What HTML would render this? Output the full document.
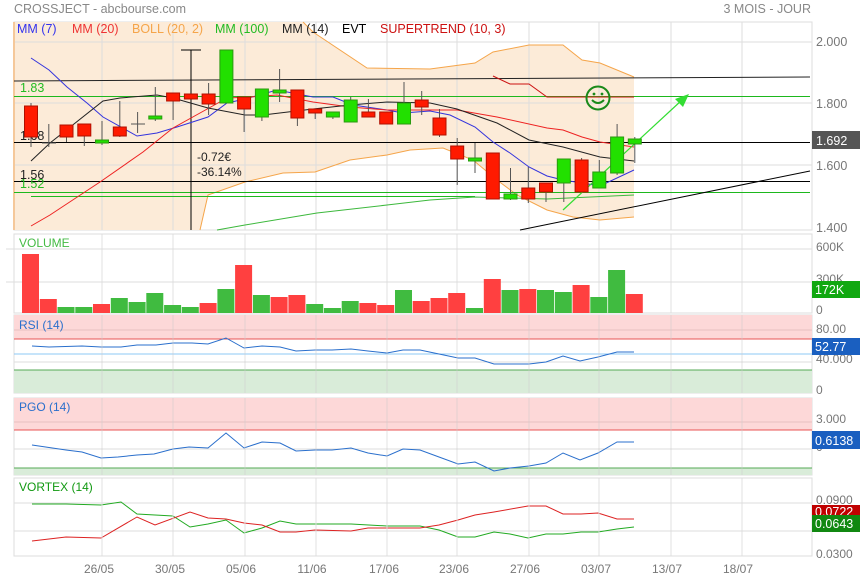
<!DOCTYPE html>
<html><head><meta charset="utf-8"><style>
html,body{margin:0;padding:0;background:#fff;}
svg{display:block;font-family:"Liberation Sans",sans-serif;}
</style></head><body>
<svg width="860" height="579" viewBox="0 0 860 579" xmlns="http://www.w3.org/2000/svg">
<rect width="860" height="579" fill="#fff"/>
<text x="14" y="13" font-size="12.5" fill="#888">CROSSJECT - abcbourse.com</text>
<text x="811" y="13" font-size="12.5" fill="#888" text-anchor="end">3 MOIS - JOUR</text>

<!-- MAIN PANEL -->
<rect x="14" y="22" width="798" height="208" fill="#fff" stroke="#ddd"/>
<path d="M14,22 L14,230 L200,230 L208,195 L245,182 L283,173 L315,172 L350,160 L387,155 L410,150 L443,148 L473,160 L497,180 L517,195 L547,210 L573,217 L600,220 L634,217 L634,77 L600,63 L582,60 L563,45 L529,45 L493,52 L475,63 L430,69 L367,68 L313,32 L303,22 Z" fill="#fcebd8"/>
<g stroke="#ddd" stroke-width="1">
<line x1="14" y1="42" x2="812" y2="42"/><line x1="14" y1="103" x2="812" y2="103"/><line x1="14" y1="165" x2="812" y2="165"/>
<line x1="102" y1="22" x2="102" y2="230"/><line x1="173" y1="22" x2="173" y2="230"/><line x1="245" y1="22" x2="245" y2="230"/><line x1="316" y1="22" x2="316" y2="230"/><line x1="387" y1="22" x2="387" y2="230"/><line x1="457" y1="22" x2="457" y2="230"/><line x1="529" y1="22" x2="529" y2="230"/><line x1="599" y1="22" x2="599" y2="230"/><line x1="671" y1="22" x2="671" y2="230"/><line x1="742" y1="22" x2="742" y2="230"/>
</g>
<line x1="14" y1="22" x2="14" y2="230" stroke="#f5c89a" stroke-width="2"/>
<!-- boll lines -->
<polyline fill="none" stroke="#f5a54a" stroke-width="1" points="303,22 313,32 367,68 430,69 475,63 493,52 529,45 563,45 582,60 600,63 634,77"/>
<polyline fill="none" stroke="#f5a54a" stroke-width="1" points="200,230 208,195 245,182 283,173 315,172 350,160 387,155 410,150 443,148 473,160 497,180 517,195 547,210 573,217 600,220 634,217"/>
<!-- horizontal lines -->
<line x1="14" y1="81" x2="810" y2="77" stroke="#222"/>
<line x1="14" y1="96.5" x2="810" y2="96.5" stroke="#1db81d"/>
<line x1="14" y1="142.5" x2="810" y2="142.5" stroke="#000"/>
<line x1="14" y1="181.5" x2="810" y2="181.5" stroke="#000"/>
<line x1="14" y1="192.5" x2="810" y2="192.5" stroke="#1db81d"/>
<line x1="31" y1="196.5" x2="475" y2="196.5" stroke="#1db81d"/>
<line x1="520" y1="230" x2="810" y2="171" stroke="#000"/>
<!-- MM100 -->
<polyline fill="none" stroke="#3cb83c" points="217,230 245,225 317,213 387,205 430,200 475,197 547,199 634,195"/>
<!-- crosshair -->
<line x1="191" y1="50" x2="191" y2="230" stroke="#000"/>
<line x1="181" y1="50" x2="201" y2="50" stroke="#000"/>
<text x="197" y="161" font-size="12" fill="#222">-0.72€</text>
<text x="197" y="176" font-size="12" fill="#222">-36.14%</text>
<!-- candles -->
<g id="candles" stroke-width="1"></g>
<!-- MAs -->
<polyline fill="none" stroke="#3333dd" points="31,58 49,70 67,87 87,103 103,117 137,136 157,133 177,127 208,117 227,103 245,99 277,90 313,97 333,97 353,105 387,110 403,113 430,111 450,115 475,127 493,142 510,153 529,167 547,176 563,180 582,183 600,186 634,170"/>
<polyline fill="none" stroke="#ee2222" points="31,226 50,215 100,182 143,152 173,128 200,113 227,98 250,97 277,95 313,102 350,107 387,110 430,110 457,110 497,117 547,128 563,130 582,137 600,142 634,147"/>
<polyline fill="none" stroke="#222" points="31,161 50,143 103,101 120,98 157,95 173,98 208,108 245,115 263,115 313,109 350,105 387,102 430,103 457,109 497,123 529,140 563,147 600,157 634,161"/>
<polyline fill="none" stroke="#cc1111" points="493,76 510,84 529,84 547,97 634,97"/>
<!-- arrow -->
<line x1="563" y1="210" x2="682" y2="100" stroke="#33dd33" stroke-width="1.2"/>
<polygon points="689,94 675,99 683,107" fill="#33dd33"/>
<!-- smiley -->
<circle cx="598" cy="98" r="11.5" fill="none" stroke="#1a8a1a" stroke-width="2"/>
<circle cx="594" cy="94" r="1.4" fill="#1a8a1a"/><circle cx="602" cy="94" r="1.4" fill="#1a8a1a"/>
<path d="M592,100 Q598,106 604,100" fill="none" stroke="#1a8a1a" stroke-width="2"/>
<!-- legend -->
<g font-size="12.5">
<text x="17" y="33" fill="#3333ee">MM (7)</text>
<text x="72" y="33" fill="#ee3333">MM (20)</text>
<text x="132" y="33" fill="#f5a54a">BOLL (20, 2)</text>
<text x="215" y="33" fill="#22bb22">MM (100)</text>
<text x="282" y="33" fill="#222">MM (14)</text>
<text x="342" y="33" fill="#000">EVT</text>
<text x="380" y="33" fill="#cc1111">SUPERTREND (10, 3)</text>
<text x="20" y="92" fill="#22bb22">1.83</text>
<text x="20" y="140" fill="#222">1.68</text>
<text x="20" y="179" fill="#222">1.56</text>
<text x="20" y="188" fill="#22bb22">1.52</text>
</g>
<g font-size="12.5" fill="#777">
<text x="816" y="46">2.000</text><text x="816" y="108">1.800</text><text x="816" y="170">1.600</text><text x="816" y="232">1.400</text>
</g>
<rect x="812" y="131" width="48" height="18" fill="#555"/>
<text x="816" y="145" font-size="12.5" fill="#fff">1.692</text>

<!-- VOLUME -->
<rect x="14" y="234" width="798" height="79" fill="#fff" stroke="#ddd"/>
<g stroke="#ddd"><line x1="6" y1="249" x2="812" y2="249"/><line x1="6" y1="282" x2="812" y2="282"/></g>
<g id="vgrid"></g>
<g id="vol"></g>
<text x="19" y="247" font-size="12" fill="#44bb44">VOLUME</text>
<g font-size="12" fill="#777"><text x="816" y="251">600K</text><text x="816" y="283">300K</text><text x="816" y="314">0</text></g>
<rect x="812" y="281" width="48" height="17" fill="#11a811"/>
<text x="815" y="294" font-size="12.5" fill="#fff">172K</text>

<!-- RSI -->
<rect x="14" y="315" width="798" height="78" fill="#fff" stroke="#ddd"/>
<rect x="14" y="315" width="798" height="24" fill="#fdd8d8"/>
<rect x="14" y="370" width="798" height="23" fill="#d9ecd9"/>
<line x1="14" y1="330" x2="812" y2="330" stroke="#e8c0c0"/>
<line x1="14" y1="339" x2="812" y2="339" stroke="#e85555"/>
<line x1="14" y1="354" x2="812" y2="354" stroke="#8ec8f5"/>
<line x1="14" y1="362" x2="812" y2="362" stroke="#ddd"/>
<line x1="14" y1="370" x2="812" y2="370" stroke="#55aa55"/>
<polyline fill="none" stroke="#2a6fcc" points="32,346 49,347 82,346 101,347 121,347 137,345 156,345 173,343 192,343 208,344 226,338 244,348 262,346 280,347 296,351 315,350 332,350 351,349 368,351 387,353 403,350 420,350 439,354 458,358 475,358 494,364 510,364 529,364 546,362 563,356 580,361 598,357 617,352 634,352"/>
<text x="19" y="329" font-size="12" fill="#2a6fcc">RSI (14)</text>
<g font-size="12" fill="#777"><text x="816" y="333">80.00</text><text x="816" y="363">40.000</text><text x="816" y="394">0</text></g>
<rect x="812" y="338" width="48" height="17" fill="#1a5fc0"/>
<text x="815" y="351" font-size="12.5" fill="#fff">52.77</text>

<!-- PGO -->
<rect x="14" y="398" width="798" height="77" fill="#fff" stroke="#ddd"/>
<rect x="14" y="398" width="798" height="32" fill="#fdd8d8"/>
<rect x="14" y="468" width="798" height="7" fill="#d9ecd9"/>
<line x1="14" y1="422" x2="812" y2="422" stroke="#e8c0c0"/>
<line x1="14" y1="430" x2="812" y2="430" stroke="#e85555"/>
<line x1="14" y1="449" x2="812" y2="449" stroke="#ddd"/>
<line x1="14" y1="468" x2="812" y2="468" stroke="#55aa55"/>
<polyline fill="none" stroke="#2a6fcc" points="32,445 66,450 82,452 101,458 118,457 137,455 154,454 173,449 189,447 208,448 226,433 244,448 262,442 280,443 296,451 315,450 332,450 351,448 368,453 387,456 403,449 420,450 439,457 458,464 475,462 494,471 510,468 529,466 546,463 563,453 580,460 598,453 617,442 634,442"/>
<text x="19" y="411" font-size="12" fill="#2a6fcc">PGO (14)</text>
<g font-size="12" fill="#777"><text x="816" y="423">3.000</text><text x="816" y="451">0</text></g>
<rect x="812" y="431" width="48" height="18" fill="#1a5fc0"/>
<text x="815" y="445" font-size="12.5" fill="#fff">0.6138</text>

<!-- VORTEX -->
<rect x="14" y="478" width="798" height="78" fill="#fff" stroke="#ddd"/>
<line x1="14" y1="503" x2="812" y2="503" stroke="#ddd"/>
<line x1="14" y1="531" x2="812" y2="531" stroke="#ddd"/>
<polyline fill="none" stroke="#22aa22" points="32,504 66,504 101,505 121,502 137,514 173,516 190,527 208,524 226,520 244,533 262,528 280,521 296,524 351,524 387,526 420,526 439,530 458,537 475,537 494,532 510,534 528,538 546,534 563,534 581,532 598,532 617,529 634,527"/>
<polyline fill="none" stroke="#dd2222" points="32,541 66,537 101,538 137,517 155,525 190,512 208,518 226,519 244,523 262,525 280,532 296,532 315,530 351,531 368,528 420,528 439,525 458,520 475,515 494,512 528,506 546,506 563,514 581,514 598,513 617,519 634,519"/>
<text x="19" y="491" font-size="12" fill="#119911">VORTEX (14)</text>
<g font-size="12" fill="#777"><text x="816" y="504">0.0900</text><text x="816" y="558">0.0300</text></g>
<rect x="812" y="505" width="48" height="12" fill="#c00000"/>
<text x="815" y="516" font-size="12.5" fill="#fff">0.0722</text>
<rect x="812" y="515" width="48" height="17" fill="#118811"/>
<text x="815" y="528" font-size="12.5" fill="#fff">0.0643</text>

<!-- dates -->
<g font-size="12" fill="#777" text-anchor="middle">
<text x="99" y="573">26/05</text><text x="170" y="573">30/05</text><text x="241" y="573">05/06</text><text x="312" y="573">11/06</text><text x="384" y="573">17/06</text><text x="454" y="573">23/06</text><text x="525" y="573">27/06</text><text x="596" y="573">03/07</text><text x="667" y="573">13/07</text><text x="738" y="573">18/07</text>
</g>

<!-- vertical grid lines in lower panels -->
<g stroke="#ddd" opacity="0.9">
<path d="M102,234V313M173,234V313M245,234V313M316,234V313M387,234V313M457,234V313M529,234V313M599,234V313M671,234V313M742,234V313"/>
<path d="M102,315V393M173,315V393M245,315V393M316,315V393M387,315V393M457,315V393M529,315V393M599,315V393M671,315V393M742,315V393" stroke="#ccc" opacity="0.6"/>
<path d="M102,398V475M173,398V475M245,398V475M316,398V475M387,398V475M457,398V475M529,398V475M599,398V475M671,398V475M742,398V475" stroke="#ccc" opacity="0.6"/>
<path d="M102,478V556M173,478V556M245,478V556M316,478V556M387,478V556M457,478V556M529,478V556M599,478V556M671,478V556M742,478V556"/>
</g>

<!-- candles explicit -->
<g stroke-width="1">
<line x1="31" y1="103" x2="31" y2="147" stroke="#555"/><rect x="24.5" y="106" width="13" height="31" fill="#ff1a00" stroke="#b01000"/>
<line x1="48.8" y1="124" x2="48.8" y2="147" stroke="#555"/><line x1="42" y1="143" x2="56" y2="143" stroke="#555"/>
<line x1="66.5" y1="125" x2="66.5" y2="142" stroke="#555"/><rect x="60" y="125" width="13" height="12" fill="#ff1a00" stroke="#b01000"/>
<line x1="84.3" y1="124" x2="84.3" y2="146" stroke="#555"/><rect x="77.8" y="124" width="13" height="12" fill="#ff1a00" stroke="#b01000"/>
<line x1="102" y1="121" x2="102" y2="145" stroke="#555"/><rect x="95.5" y="140" width="13" height="3" fill="#22e000" stroke="#2a9a10"/>
<line x1="119.8" y1="101" x2="119.8" y2="137" stroke="#555"/><rect x="113.3" y="127" width="13" height="9" fill="#ff1a00" stroke="#b01000"/>
<line x1="137.6" y1="112" x2="137.6" y2="133" stroke="#555"/><line x1="131" y1="124" x2="145" y2="124" stroke="#555"/>
<line x1="155.3" y1="87" x2="155.3" y2="121" stroke="#555"/><rect x="148.8" y="116" width="13" height="3" fill="#22e000" stroke="#2a9a10"/>
<line x1="173.1" y1="93" x2="173.1" y2="120" stroke="#555"/><rect x="166.6" y="93" width="13" height="8" fill="#ff1a00" stroke="#b01000"/>
<rect x="184.4" y="94" width="13" height="5" fill="#ff1a00" stroke="#b01000"/>
<line x1="208.6" y1="83" x2="208.6" y2="115" stroke="#555"/><rect x="202.1" y="94" width="13" height="10" fill="#ff1a00" stroke="#b01000"/>
<rect x="219.9" y="50" width="13" height="53" fill="#22e000" stroke="#2a9a10"/>
<line x1="244.1" y1="97" x2="244.1" y2="132" stroke="#555"/><rect x="237.6" y="97" width="13" height="12" fill="#ff1a00" stroke="#b01000"/>
<line x1="261.9" y1="89" x2="261.9" y2="121" stroke="#555"/><rect x="255.4" y="89" width="13" height="28" fill="#22e000" stroke="#2a9a10"/>
<line x1="279.6" y1="69" x2="279.6" y2="102" stroke="#555"/><rect x="273.1" y="90" width="13" height="3" fill="#22e000" stroke="#2a9a10"/>
<line x1="297.4" y1="90" x2="297.4" y2="126" stroke="#555"/><rect x="290.9" y="90" width="13" height="28" fill="#ff1a00" stroke="#b01000"/>
<line x1="315.2" y1="109" x2="315.2" y2="119" stroke="#555"/><rect x="308.7" y="109" width="13" height="4" fill="#ff1a00" stroke="#b01000"/>
<line x1="332.9" y1="112" x2="332.9" y2="119" stroke="#555"/><rect x="326.4" y="112" width="13" height="5" fill="#22e000" stroke="#2a9a10"/>
<line x1="350.7" y1="97" x2="350.7" y2="122" stroke="#555"/><rect x="344.2" y="100" width="13" height="22" fill="#22e000" stroke="#2a9a10"/>
<line x1="368.4" y1="99" x2="368.4" y2="117" stroke="#555"/><rect x="361.9" y="112" width="13" height="5" fill="#ff1a00" stroke="#b01000"/>
<rect x="379.7" y="112" width="13" height="12" fill="#ff1a00" stroke="#b01000"/>
<line x1="404" y1="82" x2="404" y2="124" stroke="#555"/><rect x="397.5" y="103" width="13" height="21" fill="#22e000" stroke="#2a9a10"/>
<line x1="421.7" y1="91" x2="421.7" y2="115" stroke="#555"/><rect x="415.2" y="100" width="13" height="7" fill="#ff1a00" stroke="#b01000"/>
<line x1="439.5" y1="109" x2="439.5" y2="137" stroke="#555"/><rect x="433" y="118" width="13" height="17" fill="#ff1a00" stroke="#b01000"/>
<line x1="457.2" y1="138" x2="457.2" y2="185" stroke="#555"/><rect x="450.7" y="146" width="13" height="13" fill="#ff1a00" stroke="#b01000"/>
<line x1="475" y1="143" x2="475" y2="173" stroke="#555"/><rect x="468.5" y="158" width="13" height="3" fill="#22e000" stroke="#2a9a10"/>
<rect x="486.3" y="153" width="13" height="46" fill="#ff1a00" stroke="#b01000"/>
<line x1="510.5" y1="168" x2="510.5" y2="200" stroke="#555"/><rect x="504" y="194" width="13" height="5" fill="#22e000" stroke="#2a9a10"/>
<line x1="528.3" y1="167" x2="528.3" y2="203" stroke="#555"/><rect x="521.8" y="188" width="13" height="11" fill="#ff1a00" stroke="#b01000"/>
<line x1="546" y1="183" x2="546" y2="202" stroke="#555"/><rect x="539.5" y="183" width="13" height="9" fill="#ff1a00" stroke="#b01000"/>
<line x1="563.8" y1="159" x2="563.8" y2="202" stroke="#555"/><rect x="557.3" y="159" width="13" height="24" fill="#22e000" stroke="#2a9a10"/>
<line x1="581.6" y1="158" x2="581.6" y2="192" stroke="#555"/><rect x="575.1" y="160" width="13" height="32" fill="#ff1a00" stroke="#b01000"/>
<line x1="599.3" y1="160" x2="599.3" y2="188" stroke="#555"/><rect x="592.8" y="172" width="13" height="16" fill="#22e000" stroke="#2a9a10"/>
<line x1="617.1" y1="124" x2="617.1" y2="175" stroke="#555"/><rect x="610.6" y="137" width="13" height="36" fill="#22e000" stroke="#2a9a10"/>
<line x1="634.8" y1="137" x2="634.8" y2="163" stroke="#555"/><rect x="628.3" y="139" width="13" height="5" fill="#22e000" stroke="#2a9a10"/>
</g>

<!-- volume bars -->
<g>
<rect x="22" y="254" width="17" height="59" fill="#ff4040"/>
<rect x="39.8" y="299" width="17" height="14" fill="#ff4040"/>
<rect x="57.5" y="307" width="17" height="6" fill="#40bb40"/>
<rect x="75.3" y="307" width="17" height="6" fill="#40bb40"/>
<rect x="93" y="304" width="17" height="9" fill="#ff4040"/>
<rect x="110.8" y="298" width="17" height="15" fill="#40bb40"/>
<rect x="128.6" y="302" width="17" height="11" fill="#40bb40"/>
<rect x="146.3" y="293" width="17" height="20" fill="#40bb40"/>
<rect x="164.1" y="305" width="17" height="8" fill="#40bb40"/>
<rect x="181.8" y="307" width="17" height="6" fill="#40bb40"/>
<rect x="199.6" y="303" width="17" height="10" fill="#ff4040"/>
<rect x="217.4" y="289" width="17" height="24" fill="#40bb40"/>
<rect x="235.1" y="265" width="17" height="48" fill="#ff4040"/>
<rect x="252.9" y="295" width="17" height="18" fill="#40bb40"/>
<rect x="270.6" y="297" width="17" height="16" fill="#ff4040"/>
<rect x="288.4" y="295" width="17" height="18" fill="#ff4040"/>
<rect x="306.2" y="304" width="17" height="9" fill="#40bb40"/>
<rect x="323.9" y="308" width="17" height="5" fill="#40bb40"/>
<rect x="341.7" y="301" width="17" height="12" fill="#40bb40"/>
<rect x="359.4" y="303" width="17" height="10" fill="#ff4040"/>
<rect x="377.2" y="305" width="17" height="8" fill="#ff4040"/>
<rect x="395" y="290" width="17" height="23" fill="#40bb40"/>
<rect x="412.7" y="301" width="17" height="12" fill="#ff4040"/>
<rect x="430.5" y="298" width="17" height="15" fill="#ff4040"/>
<rect x="448.2" y="293" width="17" height="20" fill="#ff4040"/>
<rect x="466" y="308" width="17" height="5" fill="#40bb40"/>
<rect x="483.8" y="279" width="17" height="34" fill="#ff4040"/>
<rect x="501.5" y="290" width="17" height="23" fill="#40bb40"/>
<rect x="519.3" y="289" width="17" height="24" fill="#ff4040"/>
<rect x="537" y="290" width="17" height="23" fill="#40bb40"/>
<rect x="554.8" y="292" width="17" height="21" fill="#40bb40"/>
<rect x="572.6" y="285" width="17" height="28" fill="#ff4040"/>
<rect x="590.3" y="297" width="17" height="16" fill="#40bb40"/>
<rect x="608.1" y="270" width="17" height="43" fill="#40bb40"/>
<rect x="625.8" y="294" width="17" height="19" fill="#ff4040"/>
</g>
</svg>
</body></html>
